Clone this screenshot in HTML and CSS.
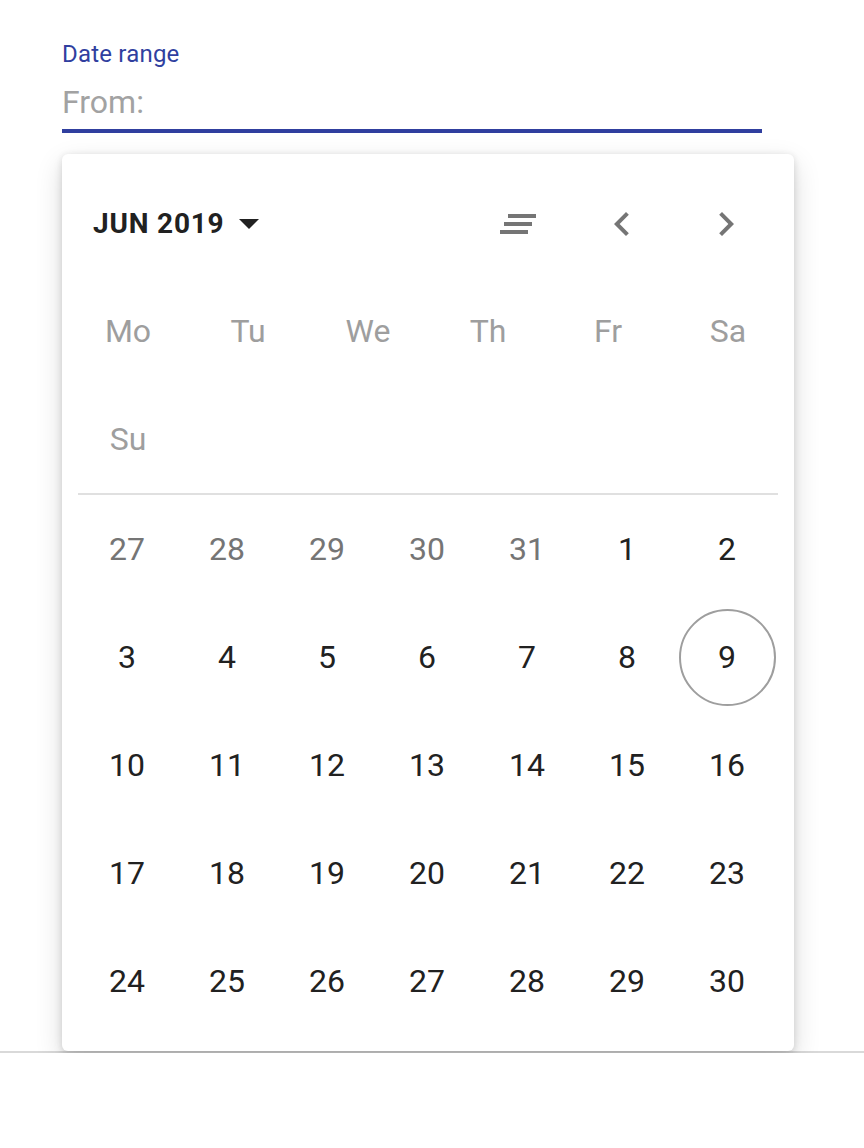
FILE: index.html
```html
<!DOCTYPE html>
<html lang="en">
<head>
<meta charset="utf-8">
<title>Date range</title>
<link rel="stylesheet" href="styles.css">
</head>
<body>
<div class="page">
  <div class="field">
    <label class="field-label">Date range</label>
    <div class="field-input">From:</div>
  </div>
  <div class="picker">
    <div class="picker-header">
      <button class="month-btn">
        <span class="month-text">JUN 2019</span>
        <svg class="caret" width="20" height="10" viewBox="0 0 20 10"><path d="M0 0h20L10 10z" fill="#212121"/></svg>
      </button>
      <div class="nav">
        <svg class="icon" width="48" height="48" viewBox="0 0 48 48">
          <rect x="14" y="14" width="28" height="4" fill="#757575"/>
          <rect x="10" y="22" width="28" height="4" fill="#757575"/>
          <rect x="6" y="30" width="28" height="4" fill="#757575"/>
        </svg>
        <svg class="icon" width="48" height="48" viewBox="0 0 24 24"><path d="M15.41 7.41L14 6l-6 6 6 6 1.41-1.41L10.83 12z" fill="#757575"/></svg>
        <svg class="icon" width="48" height="48" viewBox="0 0 24 24"><path d="M10 6L8.59 7.41 13.17 12l-4.58 4.59L10 18l6-6z" fill="#757575"/></svg>
      </div>
    </div>
    <div class="weekdays">
      <div class="wd">Mo</div>
      <div class="wd">Tu</div>
      <div class="wd">We</div>
      <div class="wd">Th</div>
      <div class="wd">Fr</div>
      <div class="wd">Sa</div>
      <div class="wd">Su</div>
    </div>
    <div class="divider"></div>
    <div class="days">
      <div class="day muted">27</div><div class="day muted">28</div><div class="day muted">29</div><div class="day muted">30</div><div class="day muted">31</div><div class="day">1</div><div class="day">2</div>
      <div class="day">3</div><div class="day">4</div><div class="day">5</div><div class="day">6</div><div class="day">7</div><div class="day">8</div><div class="day"><span class="today">9</span></div>
      <div class="day">10</div><div class="day">11</div><div class="day">12</div><div class="day">13</div><div class="day">14</div><div class="day">15</div><div class="day">16</div>
      <div class="day">17</div><div class="day">18</div><div class="day">19</div><div class="day">20</div><div class="day">21</div><div class="day">22</div><div class="day">23</div>
      <div class="day">24</div><div class="day">25</div><div class="day">26</div><div class="day">27</div><div class="day">28</div><div class="day">29</div><div class="day">30</div>
    </div>
  </div>
  <div class="page-rule"></div>
</div>
</body>
</html>
```
FILE: styles.css
```css
html, body {
  margin: 0;
  padding: 0;
  background: #ffffff;
}
body {
  font-family: Roboto, "Noto Sans", "Liberation Sans", sans-serif;
  color: #212121;
}
.page {
  padding-top: 42px;
}
.field {
  margin-left: 62px;
  width: 700px;
  border-bottom: 4px solid #303f9f;
  padding-bottom: 11px;
}
.field-label {
  display: block;
  font-size: 24px;
  line-height: 1;
  letter-spacing: 0.2px;
  color: #303f9f;
  margin-bottom: 20px;
}
.field-input {
  font-size: 32px;
  line-height: 1;
  color: #a2a2a2;
}
.picker {
  position: relative;
  z-index: 1;
  margin-left: 62px;
  margin-top: 21px;
  width: 700px;
  padding: 16px;
  background: #ffffff;
  border-radius: 6px;
  box-shadow: 0 10px 28px rgba(0,0,0,0.14), 0 4px 10px rgba(0,0,0,0.10), 0 0 6px rgba(0,0,0,0.06);
}
.picker-header {
  height: 107px;
  display: flex;
  align-items: center;
}
.month-btn {
  display: flex;
  align-items: center;
  gap: 15px;
  border: 0;
  background: none;
  padding: 0 0 0 15px;
  margin: 0;
  font-family: inherit;
  cursor: pointer;
}
.month-text {
  font-size: 28px;
  font-weight: 700;
  line-height: 1;
  letter-spacing: 0.8px;
  color: #212121;
}
.caret {
  display: block;
}
.nav {
  margin-left: auto;
  margin-right: 28px;
  display: flex;
  gap: 56px;
}
.icon {
  display: block;
}
.weekdays {
  display: grid;
  grid-template-columns: repeat(6, 100px);
  justify-content: space-between;
}
.wd {
  height: 108px;
  display: flex;
  align-items: center;
  justify-content: center;
  font-size: 32px;
  line-height: 1;
  color: #9e9e9e;
}
.divider {
  height: 2px;
  background: #e0e0e0;
}
.days {
  display: grid;
  grid-template-columns: repeat(7, 100px);
  margin-left: -1px;
}
.day {
  height: 108px;
  display: flex;
  align-items: center;
  justify-content: center;
  font-size: 32px;
  line-height: 1;
  color: #212121;
}
.day.muted {
  color: #757575;
}
.today {
  width: 93px;
  height: 93px;
  border: 2px solid #9e9e9e;
  border-radius: 50%;
  display: flex;
  align-items: center;
  justify-content: center;
}
.page-rule {
  height: 2px;
  background: #d9d9d9;
}
```
